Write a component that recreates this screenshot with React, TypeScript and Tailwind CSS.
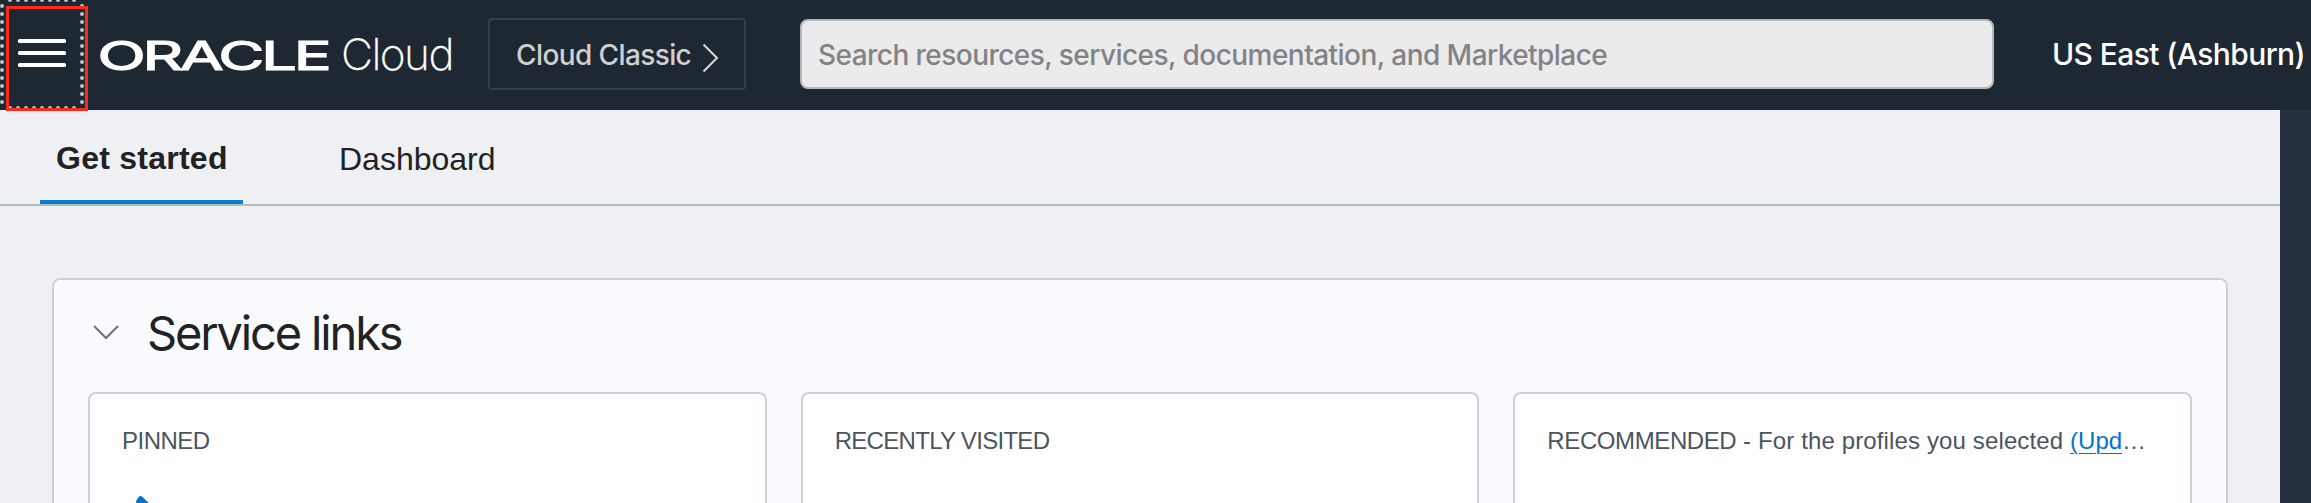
import React from "react";

function MenuButton() {
  return (
    <button
      aria-label="Open navigation menu"
      className="relative h-[110px] w-[98px] shrink-0"
    >
      <svg className="absolute left-0 top-0" width="98" height="112" viewBox="0 0 98 112" fill="none">
        <g stroke="#c3c6ca" strokeWidth="4" strokeLinecap="round" strokeDasharray="0 8">
          <path d="M2 6V110" />
          <path d="M10 0H82" />
          <path d="M82 6V108" />
          <path d="M10 108H78" />
        </g>
        <g fill="#ffffff">
          <rect x="18" y="39" width="48" height="4" rx="1.5" />
          <rect x="18" y="51" width="48" height="4" rx="1.5" />
          <rect x="18" y="63" width="48" height="4" rx="1.5" />
        </g>
        <rect x="7.5" y="7.5" width="79" height="102" stroke="#fb2a1a" strokeWidth="3" />
      </svg>
    </button>
  );
}

function Logo() {
  return (
    <svg width="360" height="60" viewBox="0 0 360 60" className="shrink-0" fill="#ffffff">
      <text
        x="-0.5"
        y="44.500"
        fontSize="40"
        fontWeight="400"
        fontFamily="Inter, sans-serif"
        stroke="#ffffff"
        strokeWidth="1.2"
        letterSpacing="-2"
        textLength="231"
        lengthAdjust="spacingAndGlyphs"
      >
        ORACLE
      </text>
      <text x="243" y="45" fontSize="43" fontWeight="200" fontFamily="Inter, sans-serif" stroke="#ffffff" strokeWidth="0.3" letterSpacing="-1.5" textLength="112" lengthAdjust="spacingAndGlyphs">
        Cloud
      </text>
    </svg>
  );
}

function Header() {
  return (
    <header className="flex h-[110px] items-start bg-[#1e2832] font-['Inter',sans-serif]">
      <MenuButton />
      <div className="pt-[25px]">
        <Logo />
      </div>
      <button className="ml-[30px] mt-[18px] flex h-[72px] w-[258px] shrink-0 items-center rounded-[4px] border-2 border-[#373f4a] pl-[26px] text-[28px] font-[450] whitespace-nowrap text-[#d0d0d0]">
        <span className="w-[186px] shrink-0 translate-y-px text-left tracking-[-0.6px]">Cloud Classic</span>
        <svg width="18" height="30" viewBox="0 0 18 30" fill="none" stroke="#d8d8d8" strokeWidth="2" className="mt-[7px] shrink-0">
          <path d="M1.500 1.500L15 15L1.500 28.500" />
        </svg>
      </button>
      <div className="ml-[54px] mt-[19px] flex h-[70px] w-[1194px] shrink-0 items-center rounded-[8px] border-2 border-[#b0b8c1] bg-[#ebebeb] pl-4 text-[28px] font-[450] tracking-[-0.55px] whitespace-nowrap text-[#828387]">
        <span className="translate-y-px">Search resources, services, documentation, and Marketplace</span>
      </div>
      <div className="ml-[58px] mt-[32px] text-[30px] leading-[44px] font-[450] tracking-[-0.6px] whitespace-nowrap text-white">
        US East (Ashburn)
      </div>
    </header>
  );
}

function Tabs() {
  return (
    <nav className="flex h-[96px] border-b-2 border-[#b1b9c2] pl-10 text-[32px] leading-[44px] whitespace-nowrap text-[#222222]">
      <div className="h-[94px] w-[203px] border-b-4 border-[#0a7dcd] pl-4 pt-[26px] font-bold tracking-[0.25px]">Get started</div>
      <div className="pl-[96px] pt-[27px]">Dashboard</div>
    </nav>
  );
}

function Card({ children }: { children: React.ReactNode }) {
  return (
    <section className="min-w-0 flex-1 rounded-t-[8px] border-2 border-b-0 border-[#cdd2d9] bg-white px-[32px] pt-[31px] text-[24px] leading-[32px] text-[#4b555f]">
      {children}
    </section>
  );
}

export default function App() {
  return (
    <div className="flex h-[503px] w-[2311px] flex-col overflow-hidden bg-[#252f3f] font-['Liberation_Sans',Arial,sans-serif]">
      <Header />
      <main className="flex w-[2280px] flex-1 flex-col bg-[#eff0f4]">
        <Tabs />
        <div className="ml-[52px] mt-[72px] flex w-[2176px] flex-1 flex-col rounded-t-[8px] border-2 border-b-0 border-[#cdd2d9] bg-[#fafbff] px-[34px]">
          <div className="flex h-[112px] items-start">
            <svg width="26" height="15" viewBox="0 0 26 15" fill="none" stroke="#6d7277" strokeWidth="2" className="ml-[5px] mt-[45px]">
              <path d="M1 1L13 13L25 1" />
            </svg>
            <h1 className="ml-[28px] mt-[25px] font-['Inter',sans-serif] text-[47px] leading-[56px] tracking-[-2.15px] text-[#222222]">
              Service links
            </h1>
          </div>
          <div className="flex flex-1 gap-[34px]">
            <Card>
              <h2 className="tracking-[-0.5px]">PINNED</h2>
              <svg width="60" height="60" viewBox="0 0 60 60" className="mt-[38px] ml-[13px]" fill="#0572ce">
                <path d="M1 6L4 1.500Q5.500 .5 7 1.500L58 50L52 56L2 10Z" />
              </svg>
            </Card>
            <Card>
              <h2 className="tracking-[-0.7px]">RECENTLY VISITED</h2>
            </Card>
            <Card>
              <h2 className="whitespace-nowrap">
                <span className="tracking-[-0.4px]">RECOMMENDED</span>
                <span className="tracking-[0.13px]"> - For the profiles you selected </span>
                <a className="text-[#0572ce] underline decoration-1 underline-offset-4">(Upd</a>…
              </h2>
            </Card>
          </div>
        </div>
      </main>
    </div>
  );
}
